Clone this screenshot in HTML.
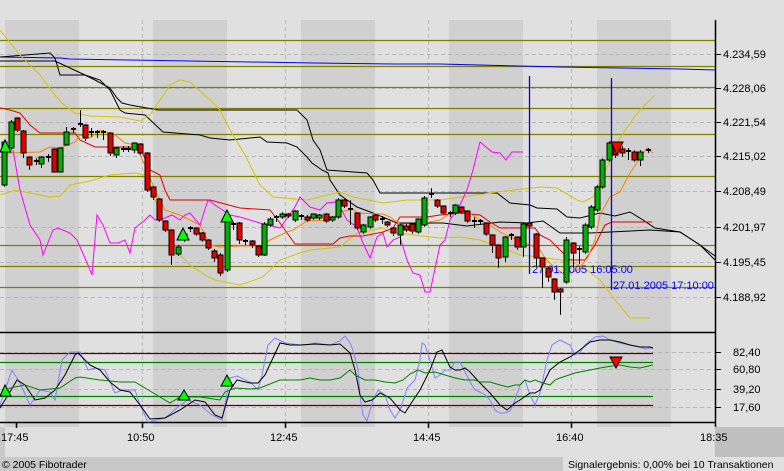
<!DOCTYPE html>
<html><head><meta charset="utf-8"><style>
html,body{margin:0;padding:0;background:#e0e0e0;}
svg{display:block;font-family:"Liberation Sans",sans-serif;}
</style></head><body>
<svg width="784" height="471" viewBox="0 0 784 471" xmlns="http://www.w3.org/2000/svg">
<rect x="0" y="0" width="784" height="471" fill="#e0e0e0"/>
<g fill="#d0d0d0">
<rect x="5" y="20" width="74" height="407"/>
<rect x="153" y="20" width="74" height="407"/>
<rect x="301" y="20" width="74" height="407"/>
<rect x="449" y="20" width="74" height="407"/>
<rect x="597" y="20" width="74" height="407"/>
</g>
<rect x="0" y="427" width="5" height="30" fill="#c8c8c8"/>
<rect x="715" y="427" width="69" height="30" fill="#c0c0c0"/>
<rect x="0" y="457" width="784" height="14" fill="#c8c8c8"/>
<rect x="563" y="457" width="221" height="14" fill="#e0e0e0"/>
<g stroke="#b8b8b8" stroke-width="1" stroke-dasharray="4,3" fill="none">
<path d="M0 54.5H715M0 88.5H715M0 122.5H715M0 156.5H715M0 191.5H715M0 227.5H715M0 262.5H715M0 297.5H715"/>
<path d="M0 352.5H715M0 369.5H715M0 389.5H715M0 407.5H715"/>
<path d="M142.5 20V427M285.5 20V427M428.5 20V427M571.5 20V427"/>
</g>
<g stroke="#808000" stroke-width="1.3">
<path d="M0 40.5H715M0 66.5H715M0 87.5H715M0 108.5H715M0 134.5H715M0 176.5H715M0 245.5H715M0 266.5H715M0 287.5H715"/>
</g>
<g stroke-width="1.3" fill="none">
<path d="M0 353.5H653M0 405.5H653" stroke="#600000"/>
<path d="M0 362.5H653M0 396.5H653" stroke="#008000"/>
</g>
<path d="M0 332.5H715M0 422.5H715" stroke="#000" stroke-width="1.5"/>
<path d="M715.5 20V427" stroke="#000" stroke-width="1.5"/>
<g stroke="#000"><path d="M715 54.5h6M715 88.5h6M715 122.5h6M715 156.5h6M715 191.5h6M715 227.5h6M715 262.5h6M715 297.5h6M715 352.5h6M715 369.5h6M715 389.5h6M715 407.5h6"/></g>
<g stroke="#000" stroke-width="1.5"><path d="M16.5 423v5M142.5 423v5M285.5 423v5M428.5 423v5M571.5 423v5"/></g>
<g font-size="11" fill="#000">
<text x="723" y="58">4.234,59</text>
<text x="723" y="92">4.228,06</text>
<text x="723" y="126">4.221,54</text>
<text x="723" y="160">4.215,02</text>
<text x="723" y="195">4.208,49</text>
<text x="723" y="231">4.201,97</text>
<text x="723" y="266">4.195,45</text>
<text x="723" y="301">4.188,92</text>
<text x="733" y="356">82,40</text>
<text x="733" y="373">60,80</text>
<text x="733" y="393">39,20</text>
<text x="733" y="411">17,60</text>
<text x="1" y="441">17:45</text>
<text x="127" y="441">10:50</text>
<text x="270" y="441">12:45</text>
<text x="413" y="441">14:45</text>
<text x="556" y="441">16:40</text>
<text x="700" y="441">18:35</text>
<text x="2" y="468" font-size="10.5">© 2005 Fibotrader</text>
<text x="568" y="468" font-size="10.5">Signalergebnis: 0,00% bei 10 Transaktionen</text>
</g>
<g fill="none" stroke-width="1">
<polyline stroke="#0000ff" points="0,57 60,58 70,59 130,60 190,61 250,62 315,63 395,64 440,64 520,66 560,67 620,68 680,69 715,70"/>
<polyline stroke="#000" points="0,57 50,53 55,58 60,75 85,75 95,80 110,88 117,98 122,103 130,105 158,110 297,110 307,120 313,140 320,150 327,170 367,173 373,180 380,193 430,193 497,193 510,203 530,205 537,208 557,209 567,217 580,218 600,213 615,216 630,212 643,220 655,228 680,232 700,245 715,256"/>
<polyline stroke="#000" points="0,61 55,61 85,75 100,80 110,90 120,110 125,113 145,115 163,132 200,135 210,138 230,140 260,137 267,142 287,143 297,147 307,157 312,163 322,170 328,173 330,180 340,195 357,207 373,213 397,223 443,223 467,226 500,222 527,223 543,221 560,233 590,233 650,230 680,232 700,245 715,260"/>
<polyline stroke="#d4c400" points="0,30 20,55 40,75 55,95 62,103 75,113 90,116 120,117 140,121 150,115 160,100 170,85 180,80 190,82 210,100 220,110 230,130 245,155 255,175 260,185 273,197 307,200 340,192 353,197 383,203 407,200 440,200 497,192 540,187 557,188 577,200 583,202 593,197 603,177 617,143 630,123 640,110 655,95"/>
<polyline stroke="#d4c400" points="0,195 15,190 30,193 50,197 60,196 70,185 90,181 110,175 135,173 145,175 155,200 165,225 175,250 190,265 205,275 215,280 240,285 263,277 280,260 300,253 310,250 340,247 357,233 383,228 390,232 413,235 440,238 460,237 480,240 495,245 520,255 540,257 560,260 580,265 600,280 615,300 630,318 650,318"/>
<polyline stroke="#e00000" points="0,108 10,110 20,113 30,125 40,133 75,133 80,140 95,147 140,147 150,170 160,175 165,190 170,200 210,200 240,208 270,210 280,223 295,244 333,244 340,238 350,236 363,236 383,232 393,228 400,217 427,217 440,215 460,213 480,215 490,222 500,228 535,228 540,235 550,240 560,250 570,260 585,260 595,245 605,225 612,222 652,222"/>
<polyline stroke="#ff8000" points="0,158 10,153 40,152 50,147 60,148 75,142 80,135 90,138 100,130 115,135 125,143 135,145 145,165 155,190 165,210 180,215 190,220 200,225 210,245 220,247 240,246 260,246 270,240 287,232 293,230 307,221 330,220 340,212 353,209 357,213 383,214 390,217 400,224 420,224 440,220 460,207 480,220 490,225 500,232 510,237 530,245 540,250 545,258 555,268 565,275 578,270 588,257 595,240 600,215 610,197 620,192 630,173 647,148 653,153"/>
<polyline stroke="#ff00ff" points="13,150 20,190 30,225 40,240 43,255 53,230 58,228 70,233 77,240 88,265 92,275 97,215 103,225 110,243 118,243 125,240 130,253 135,228 145,220 150,215 155,220 165,218 172,215 180,220 185,215 190,213 200,225 208,200 215,205 230,215 240,217 260,223 280,228 295,207 300,197 310,207 320,210 327,203 335,202 340,207 347,220 357,227 363,243 370,258 377,237 383,233 387,247 393,240 400,237 407,260 413,273 420,275 425,292 430,292 440,245 445,240 450,220 460,205 467,190 473,170 480,142 492,152 500,153 506,160 512,152 523,152"/>
</g>
<path d="M529.5 76V274M611.5 78V290" stroke="#0000ff" stroke-width="1.3"/>
<g font-size="11" fill="#0000ff">
<text x="532" y="273">27.01.2005 16:05:00</text>
<text x="613" y="289">27.01.2005 17:10:00</text>
</g>
<!-- candles -->
<path stroke="#000" stroke-width="1" fill="none" d="M4.5 140V187M11.5 120V150M17.5 117V132M23.5 130V158M29.5 156V170M36.5 158V165M41.5 156V168M48.5 154V162M54.5 148V173M60.5 147V173M66.5 127V146M73.5 127V133M80.5 110V127M85.5 124V141M91.5 128V137M97.5 130V138M103.5 130V140M110.5 132V156M116.5 147V158M123.5 146V152M128.5 146V152M134.5 142V153M140.5 143V155M147.5 152V192M153.5 186V200M159.5 198V222M165.5 220V232M171.5 229V265M178.5 245V256M184.5 232V242M190.5 226V232M196.5 227V236M202.5 232V242M208.5 239V250M214.5 249V262M220.5 253V276M227.5 220V272M233.5 222V230M239.5 222V244M245.5 239V245M252.5 240V248M258.5 245V257M264.5 222V256M270.5 217V227M276.5 215V222M282.5 212V219M288.5 213V218M295.5 210V222M301.5 214V220M307.5 215V222M313.5 213V220M319.5 214V220M326.5 213V223M332.5 216V222M338.5 198V219M344.5 199V208M350.5 200V225M357.5 212V230M363.5 224V234M370.5 216V229M375.5 214V222M382.5 216V224M387.5 221V227M393.5 227V236M400.5 224V245M406.5 224V232M412.5 223V234M418.5 218V234M424.5 196V227M431.5 188V198M437.5 199V208M443.5 205V215M450.5 211V217M455.5 204V215M461.5 206V214M467.5 210V223M474.5 217V228M480.5 219V225M486.5 222V236M492.5 234V253M498.5 244V268M505.5 236V262M511.5 233V240M517.5 236V250M523.5 222V257M529.5 222V228M536.5 233V267M542.5 257V288M548.5 267V282M554.5 278V300M560.5 288V315M566.5 237V284M573.5 242V267M579.5 246V264M585.5 223V254M591.5 205V229M597.5 185V212M602.5 158V189M609.5 141V162M615.5 143V158M622.5 146V157M628.5 148V160M634.5 150V162M640.5 150V166M648.5 148V153"/>
<path stroke="#000" stroke-width="2" fill="none" d="M34 161h5M46 157h5M71 129h5M78 124h5M89 132h5M95 132h5M101 132h5M121 149h5M126 149h5M188 228h5M231 224h5M243 241h5M274 217h5M299 216h5M348 209h5M380 219h5M429 194h5M448 213h5M472 221h5M478 221h5M509 235h5M577 249h5M626 151h5M646 150h5"/>
<g fill="#00b000" stroke="#000" stroke-width="1">
<rect x="2" y="142" width="5" height="43"/><rect x="9" y="122" width="5" height="26"/><rect x="39" y="157" width="5" height="7"/><rect x="58" y="148" width="5" height="24"/><rect x="64" y="132" width="5" height="13"/><rect x="114" y="148" width="5" height="7"/><rect x="132" y="143" width="5" height="7"/><rect x="176" y="247" width="5" height="7"/><rect x="182" y="234" width="5" height="6"/><rect x="225" y="222" width="5" height="48"/><rect x="262" y="224" width="5" height="31"/><rect x="268" y="219" width="5" height="6"/><rect x="280" y="214" width="5" height="3"/><rect x="293" y="211" width="5" height="9"/><rect x="311" y="214" width="5" height="4"/><rect x="317" y="215" width="5" height="3"/><rect x="330" y="217" width="5" height="3"/><rect x="336" y="200" width="5" height="17"/><rect x="361" y="225" width="5" height="7"/><rect x="368" y="217" width="5" height="10"/><rect x="398" y="225" width="5" height="10"/><rect x="416" y="219" width="5" height="13"/><rect x="422" y="198" width="5" height="27"/><rect x="453" y="205" width="5" height="8"/><rect x="503" y="237" width="5" height="20"/><rect x="521" y="224" width="5" height="23"/><rect x="564" y="240" width="5" height="42"/><rect x="583" y="225" width="5" height="27"/><rect x="589" y="207" width="5" height="20"/><rect x="595" y="187" width="5" height="23"/><rect x="600" y="160" width="5" height="27"/><rect x="607" y="143" width="5" height="17"/><rect x="638" y="152" width="5" height="8"/>
</g>
<g fill="#e00000" stroke="#000" stroke-width="1">
<rect x="15" y="118" width="5" height="12"/><rect x="21" y="131" width="5" height="22"/><rect x="27" y="157" width="5" height="8"/><rect x="52" y="149" width="5" height="23"/><rect x="83" y="125" width="5" height="13"/><rect x="108" y="133" width="5" height="20"/><rect x="138" y="144" width="5" height="9"/><rect x="145" y="153" width="5" height="37"/><rect x="151" y="187" width="5" height="10"/><rect x="157" y="199" width="5" height="21"/><rect x="163" y="221" width="5" height="9"/><rect x="169" y="230" width="5" height="25"/><rect x="194" y="228" width="5" height="6"/><rect x="200" y="233" width="5" height="7"/><rect x="206" y="240" width="5" height="8"/><rect x="212" y="251" width="5" height="7"/><rect x="218" y="255" width="5" height="18"/><rect x="237" y="223" width="5" height="17"/><rect x="250" y="241" width="5" height="4"/><rect x="256" y="246" width="5" height="9"/><rect x="286" y="214" width="5" height="2"/><rect x="305" y="217" width="5" height="3"/><rect x="324" y="214" width="5" height="7"/><rect x="342" y="200" width="5" height="6"/><rect x="355" y="213" width="5" height="15"/><rect x="373" y="215" width="5" height="5"/><rect x="385" y="222" width="5" height="3"/><rect x="391" y="228" width="5" height="5"/><rect x="404" y="226" width="5" height="4"/><rect x="410" y="224" width="5" height="7"/><rect x="435" y="200" width="5" height="6"/><rect x="441" y="206" width="5" height="7"/><rect x="459" y="207" width="5" height="5"/><rect x="465" y="211" width="5" height="10"/><rect x="484" y="223" width="5" height="11"/><rect x="490" y="235" width="5" height="10"/><rect x="496" y="245" width="5" height="13"/><rect x="515" y="237" width="5" height="10"/><rect x="527" y="223" width="5" height="3"/><rect x="534" y="234" width="5" height="24"/><rect x="540" y="258" width="5" height="9"/><rect x="546" y="268" width="5" height="9"/><rect x="552" y="279" width="5" height="13"/><rect x="558" y="289" width="5" height="3"/><rect x="571" y="243" width="5" height="10"/><rect x="613" y="145" width="5" height="10"/><rect x="620" y="149" width="5" height="4"/><rect x="632" y="152" width="5" height="8"/>
</g>
<g fill="none" stroke-width="1">
<polyline stroke="#8080ff" points="0,405 12,370 20,383 30,405 40,390 50,392 55,400 62,360 70,352 80,352 88,370 95,368 105,370 115,393 122,390 135,390 140,405 148,422 165,418 178,407 188,400 200,405 212,415 222,420 230,378 237,376 250,382 258,390 262,375 268,345 275,338 285,343 300,345 305,345 315,343 330,345 340,341 345,336 350,343 353,350 358,370 360,395 363,415 367,421 370,410 373,400 378,390 385,395 390,410 395,418 400,410 405,395 407,388 410,385 415,380 420,360 422,343 425,345 430,360 435,378 440,375 445,370 450,370 455,362 460,362 465,372 470,382 475,390 480,392 485,395 490,400 495,410 500,413 505,413 510,411 515,400 520,385 525,380 530,395 535,405 540,393 547,360 552,345 560,340 570,345 575,355 580,352 585,345 595,337 603,336 610,340 620,343 630,345 640,347 645,349 650,348 653,348"/>
<polyline stroke="#000" points="0,408 10,392 17,380 25,385 35,400 45,398 55,390 65,375 75,355 78,353 90,365 100,370 110,382 120,390 130,392 140,405 150,419 165,418 180,410 195,400 205,402 215,415 222,418 230,390 237,380 250,383 258,383 265,375 272,360 280,343 290,345 300,345 315,344 330,345 340,344 350,353 355,370 360,395 365,402 372,400 380,393 390,398 400,410 405,413 410,405 420,390 430,370 437,352 442,350 450,367 455,370 460,370 465,368 470,372 480,383 490,393 500,405 507,410 515,403 520,400 530,393 535,393 540,390 545,380 550,370 560,362 570,357 580,350 590,342 600,340 610,340 620,342 630,345 640,347 650,347 653,348"/>
<polyline stroke="#008000" points="0,395 10,388 25,385 40,390 60,388 75,378 80,377 100,380 120,382 135,382 145,388 160,397 170,403 180,397 200,397 220,400 225,392 235,388 250,389 260,388 280,380 300,380 310,378 320,380 330,380 340,378 350,370 355,375 365,380 375,380 385,382 395,383 403,380 410,374 418,370 425,373 435,372 445,375 455,378 465,380 475,380 480,382 490,382 500,385 508,387 515,385 520,385 525,380 530,382 535,380 540,382 550,385 555,380 560,378 575,373 590,370 600,368 612,366 620,365 630,367 640,368 653,365"/>
</g>
<g stroke="#000" stroke-width="1">
<polygon fill="#00ff00" points="5,140 0,152 11,152"/>
<polygon fill="#00ff00" points="183,228 177,240 189,240"/>
<polygon fill="#00ff00" points="227,210 221,222 233,222"/>
<polygon fill="#00ff00" points="5,385 0,396 11,396"/>
<polygon fill="#00ff00" points="184,390 178,400 190,400"/>
<polygon fill="#00ff00" points="227,375 221,386 233,386"/>
<polygon fill="#ff0000" points="611,142 623,142 617,155"/>
<polygon fill="#ff0000" points="610,357 622,357 616,368"/>
</g>
</svg>
</body></html>
